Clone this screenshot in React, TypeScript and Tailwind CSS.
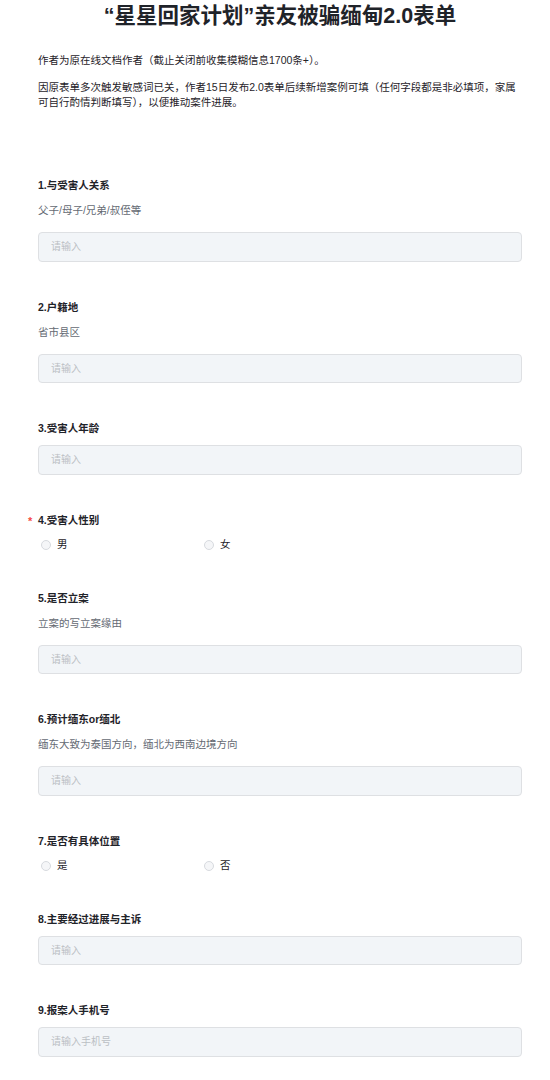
const font = {
  fontFamily: '"Liberation Sans", "Noto Sans CJK SC", sans-serif',
}

type Question = {
  label: string
  desc?: string
  kind: "input" | "radio"
  placeholder?: string
  options?: string[]
  required?: boolean
}

const questions: Question[] = [
  { label: "1.与受害人关系", desc: "父子/母子/兄弟/叔侄等", kind: "input" },
  { label: "2.户籍地", desc: "省市县区", kind: "input" },
  { label: "3.受害人年龄", kind: "input" },
  { label: "4.受害人性别", kind: "radio", options: ["男", "女"], required: true },
  { label: "5.是否立案", desc: "立案的写立案缘由", kind: "input" },
  { label: "6.预计缅东or缅北", desc: "缅东大致为泰国方向，缅北为西南边境方向", kind: "input" },
  { label: "7.是否有具体位置", kind: "radio", options: ["是", "否"] },
  { label: "8.主要经过进展与主诉", kind: "input" },
  { label: "9.报案人手机号", kind: "input", placeholder: "请输入手机号" },
]

function Field({ q }: { q: Question }) {
  return (
    <div className="pb-[37px]">
      <div className="relative text-[10.5px] leading-[16px] font-bold text-[#1f2329]">
        {q.required && (
          <span className="absolute left-[-10px] top-[1px] text-[#f54a45] text-[11px]">*</span>
        )}
        {q.label}
      </div>
      {q.desc && (
        <div className="mt-[9px] text-[10.5px] leading-[16px] text-[#646a73]">{q.desc}</div>
      )}
      {q.kind === "input" ? (
        <div
          className={`${q.desc ? "mt-[14px]" : "mt-[9px]"} h-[29.5px] rounded-[4px] border border-[#dee0e3] bg-[#f2f5f8] flex items-center px-[12px] text-[10px] text-[#bbbfc4]`}
        >
          {q.placeholder ?? "请输入"}
        </div>
      ) : (
        <div className="mt-[9px] flex pl-[3px] h-[16px] items-center">
          {q.options?.map((o) => (
            <div key={o} className="w-[163px] flex items-center gap-[6px]">
              <span className="w-[10px] h-[10px] rounded-full border border-[#d7dadf] bg-[#f5f6f8]" />
              <span className="text-[10.5px] text-[#1f2329]">{o}</span>
            </div>
          ))}
        </div>
      )}
    </div>
  )
}

export default function App() {
  return (
    <div className="bg-white min-h-screen pl-[38px] pr-[28px]" style={font}>
      <h1 className="text-center text-[21.5px] leading-[32px] font-bold text-[#1f2329]">
        “星星回家计划”亲友被骗缅甸2.0表单
      </h1>
      <p className="mt-[20.5px] text-[10.5px] leading-[15px] text-[#1f2329]">
        作者为原在线文档作者（截止关闭前收集模糊信息1700条+）。
      </p>
      <p className="mt-[12px] text-[10.5px] leading-[15px] text-[#1f2329]">
        因原表单多次触发敏感词已关，作者15日发布2.0表单后续新增案例可填（任何字段都是非必填项，家属可自行酌情判断填写），以便推动案件进展。
      </p>
      <div className="mt-[67.5px]">
        {questions.map((q) => (
          <Field key={q.label} q={q} />
        ))}
      </div>
    </div>
  )
}
